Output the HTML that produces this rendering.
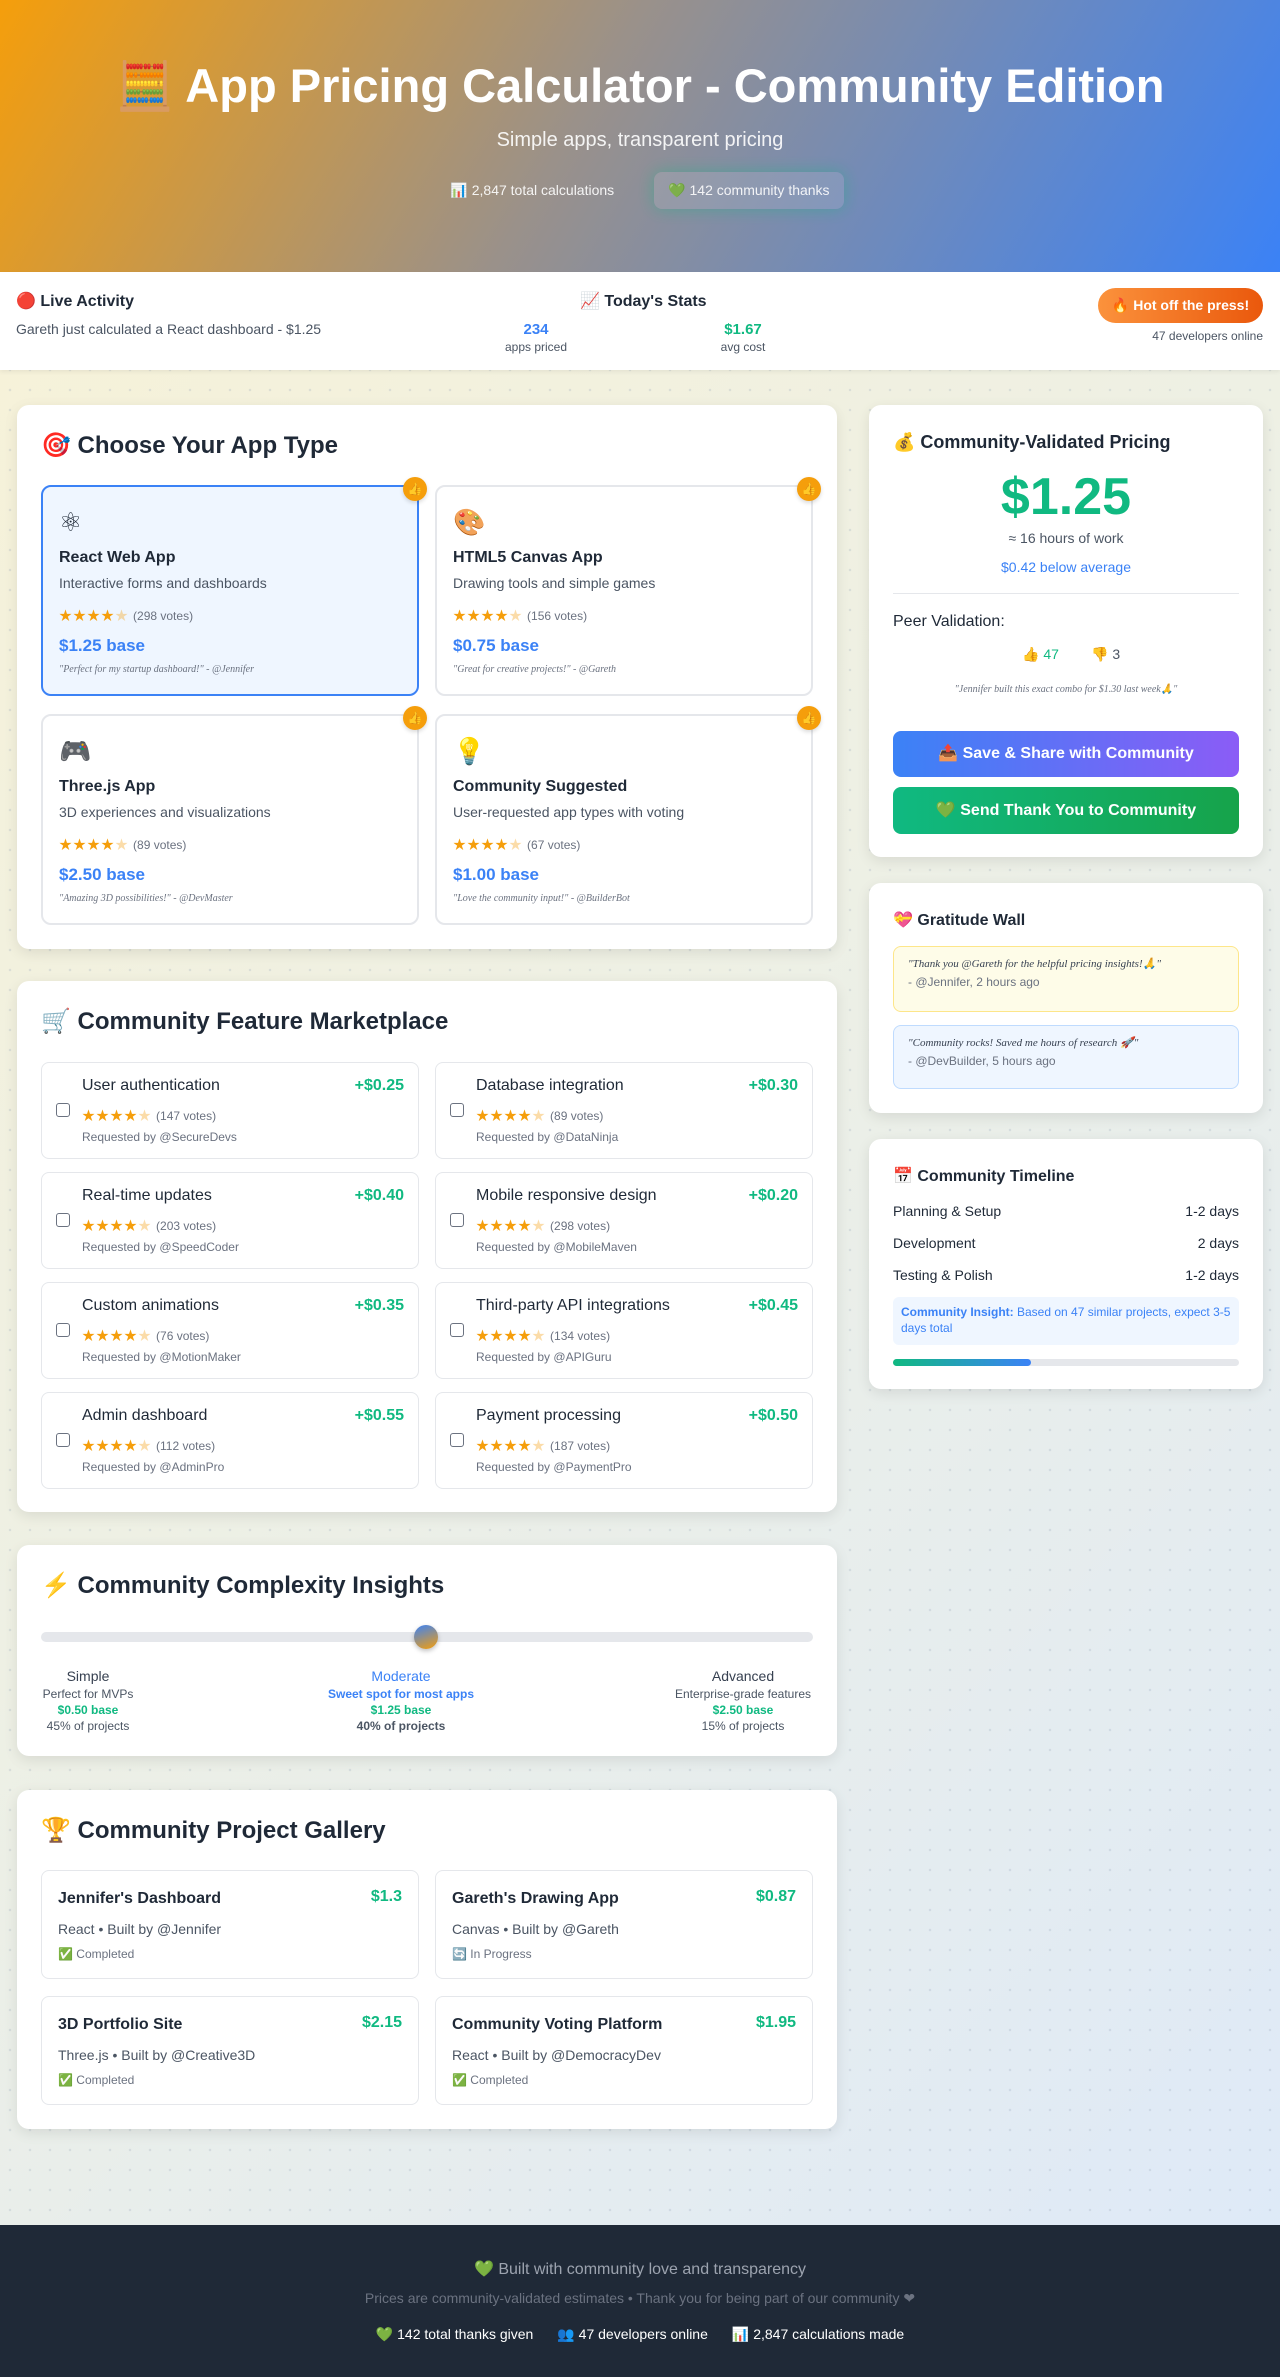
<!DOCTYPE html>
<html><head><meta charset="utf-8"><style>
*{box-sizing:border-box;margin:0;padding:0}
body{width:1280px;height:2377px;position:relative;font-family:"Liberation Sans","Noto Sans CJK SC",sans-serif;color:#1f2937;
background:radial-gradient(circle,rgba(148,163,184,.25) 1px,transparent 1.5px) 0 0/20px 20px,linear-gradient(135deg,#f8f2d6 0%,#eef0e4 45%,#dde9f9 100%);overflow:hidden}
.abs{position:absolute}
header{position:absolute;left:0;top:0;width:1280px;height:272px;background:linear-gradient(120deg,#f59e0b 0%,#9a918a 45%,#3b82f6 100%);color:#fff;text-align:center}
header h1{position:absolute;top:58px;width:100%;font-size:47px;font-weight:700}
header .sub{position:absolute;top:129px;width:100%;font-size:20px;opacity:.9}
header .pills{position:absolute;top:172px;width:100%;display:flex;justify-content:center;gap:26px;font-size:14px}
header .pills span{padding:10px 14px;opacity:.9}
header .pills .glow{background:rgba(255,255,255,.12);border-radius:8px;box-shadow:0 0 16px rgba(16,185,129,.45)}
.bar{position:absolute;top:272px;left:0;width:1280px;height:98px;background:#fff;box-shadow:0 2px 4px rgba(0,0,0,.06)}
.card{position:absolute;background:#fff;border-radius:12px;box-shadow:0 4px 14px rgba(0,0,0,.09)}
.card h2{position:absolute;left:24px;font-size:24px;font-weight:700;color:#1f2937}
.app{position:absolute;width:378px;height:211px;border:2px solid #e5e7eb;border-radius:10px;background:#fff;padding:0 16px}
.app.sel{border-color:#3b82f6;background:#eff6ff}
.app .ic{position:absolute;top:20px;left:16px;font-size:26px}
.app .t{position:absolute;top:62px;left:16px;font-size:16px;font-weight:700}
.app .d{position:absolute;top:88px;left:16px;font-size:14px;color:#4b5563}
.stars{color:#f59e0b;font-size:13px;letter-spacing:1px}
.stars i{font-style:normal;opacity:.35}
.v{color:#6b7280;font-size:12px;margin-left:4px}
.app .s{position:absolute;top:118px;left:16px}
.app .p{position:absolute;top:149px;left:16px;font-size:17px;font-weight:700;color:#3b82f6}
.app .q{position:absolute;top:177px;left:16px;font-size:10px;color:#6b7280;font-style:italic;font-family:"Comic Sans MS",cursive}
.badge{position:absolute;top:-10px;right:-10px;width:24px;height:24px;border-radius:50%;background:#f59e0b;color:#fff;font-size:12px;text-align:center;line-height:24px;box-shadow:0 2px 4px rgba(0,0,0,.15)}
.feat{position:absolute;width:378px;height:97px;border:1.5px solid #e5e7eb;border-radius:8px;background:#fff}
.feat .cb{position:absolute;left:14px;top:40px;width:14px;height:14px;border:1.5px solid #6b7280;border-radius:3px}
.feat .t{position:absolute;left:40px;top:14px;font-size:16px;color:#1f2937}
.feat .s{position:absolute;left:40px;top:42px}
.feat .r{position:absolute;left:40px;top:67px;font-size:12px;color:#6b7280}
.feat .pr{position:absolute;right:14px;top:14px;font-size:16px;font-weight:700;color:#10b981}
.gal{position:absolute;width:378px;height:109px;border:1.5px solid #e5e7eb;border-radius:8px;background:#fff}
.gal .t{position:absolute;left:16px;top:19px;font-size:16px;font-weight:700}
.gal .s{position:absolute;left:16px;top:50px;font-size:14px;color:#4b5563}
.gal .st{position:absolute;left:16px;top:76px;font-size:12px;color:#6b7280}
.gal .pr{position:absolute;right:16px;top:17px;font-size:16px;font-weight:700;color:#10b981}
.cx{position:absolute;text-align:center;font-size:12px;color:#4b5563;line-height:16px}
.cx b{display:block;font-size:14px;font-weight:400;color:#374151;margin-bottom:2px}
.row{position:absolute;left:24px;right:24px;display:flex;justify-content:space-between;font-size:14px;color:#1f2937}
footer{position:absolute;left:0;top:2225px;width:1280px;height:152px;background:#1f2937;text-align:center}
</style></head><body>

<header>
<h1>🧮 App Pricing Calculator - Community Edition</h1>
<div class="sub">Simple apps, transparent pricing</div>
<div class="pills"><span>📊 2,847 total calculations</span><span class="glow">💚 142 community thanks</span></div>
</header>

<div class="bar">
<div class="abs" style="left:16px;top:19px;font-size:16px;font-weight:700">🔴 Live Activity</div>
<div class="abs" style="left:16px;top:49px;font-size:14px;color:#4b5563">Gareth just calculated a React dashboard - $1.25</div>
<div class="abs" style="left:580px;top:19px;font-size:16px;font-weight:700">📈 Today's Stats</div>
<div class="abs" style="left:496px;top:49px;width:80px;text-align:center"><div style="color:#3b82f6;font-weight:700;font-size:15px">234</div><div style="font-size:12px;color:#4b5563;margin-top:2px">apps priced</div></div>
<div class="abs" style="left:703px;top:49px;width:80px;text-align:center"><div style="color:#10b981;font-weight:700;font-size:15px">$1.67</div><div style="font-size:12px;color:#4b5563;margin-top:2px">avg cost</div></div>
<div class="abs" style="left:1098px;top:16px;width:165px;height:35px;border-radius:18px;background:linear-gradient(90deg,#fb923c,#ea580c);color:#fff;font-size:14px;font-weight:700;text-align:center;line-height:35px">🔥 Hot off the press!</div>
<div class="abs" style="right:17px;top:57px;font-size:12px;color:#4b5563">47 developers online</div>
</div>

<!-- App type -->
<div class="card" style="left:17px;top:405px;width:820px;height:544px">
<h2 style="top:26px">🎯 Choose Your App Type</h2>
<div class="app sel" style="left:24px;top:80px"><div class="badge">👍</div><div class="ic">⚛</div><div class="t">React Web App</div><div class="d">Interactive forms and dashboards</div><div class="s"><span class="stars">★★★★<i>★</i></span><span class="v">(298 votes)</span></div><div class="p">$1.25 base</div><div class="q">"Perfect for my startup dashboard!" - @Jennifer</div></div>
<div class="app" style="left:418px;top:80px"><div class="badge">👍</div><div class="ic">🎨</div><div class="t">HTML5 Canvas App</div><div class="d">Drawing tools and simple games</div><div class="s"><span class="stars">★★★★<i>★</i></span><span class="v">(156 votes)</span></div><div class="p">$0.75 base</div><div class="q">"Great for creative projects!" - @Gareth</div></div>
<div class="app" style="left:24px;top:309px"><div class="badge">👍</div><div class="ic">🎮</div><div class="t">Three.js App</div><div class="d">3D experiences and visualizations</div><div class="s"><span class="stars">★★★★<i>★</i></span><span class="v">(89 votes)</span></div><div class="p">$2.50 base</div><div class="q">"Amazing 3D possibilities!" - @DevMaster</div></div>
<div class="app" style="left:418px;top:309px"><div class="badge">👍</div><div class="ic">💡</div><div class="t">Community Suggested</div><div class="d">User-requested app types with voting</div><div class="s"><span class="stars">★★★★<i>★</i></span><span class="v">(67 votes)</span></div><div class="p">$1.00 base</div><div class="q">"Love the community input!" - @BuilderBot</div></div>
</div>

<!-- Features -->
<div class="card" style="left:17px;top:981px;width:820px;height:531px">
<h2 style="top:26px">🛒 Community Feature Marketplace</h2>
<div class="feat" style="left:24px;top:81px"><div class="cb"></div><div class="t">User authentication</div><div class="pr">+$0.25</div><div class="s"><span class="stars">★★★★<i>★</i></span><span class="v">(147 votes)</span></div><div class="r">Requested by @SecureDevs</div></div>
<div class="feat" style="left:418px;top:81px"><div class="cb"></div><div class="t">Database integration</div><div class="pr">+$0.30</div><div class="s"><span class="stars">★★★★<i>★</i></span><span class="v">(89 votes)</span></div><div class="r">Requested by @DataNinja</div></div>
<div class="feat" style="left:24px;top:191px"><div class="cb"></div><div class="t">Real-time updates</div><div class="pr">+$0.40</div><div class="s"><span class="stars">★★★★<i>★</i></span><span class="v">(203 votes)</span></div><div class="r">Requested by @SpeedCoder</div></div>
<div class="feat" style="left:418px;top:191px"><div class="cb"></div><div class="t">Mobile responsive design</div><div class="pr">+$0.20</div><div class="s"><span class="stars">★★★★<i>★</i></span><span class="v">(298 votes)</span></div><div class="r">Requested by @MobileMaven</div></div>
<div class="feat" style="left:24px;top:301px"><div class="cb"></div><div class="t">Custom animations</div><div class="pr">+$0.35</div><div class="s"><span class="stars">★★★★<i>★</i></span><span class="v">(76 votes)</span></div><div class="r">Requested by @MotionMaker</div></div>
<div class="feat" style="left:418px;top:301px"><div class="cb"></div><div class="t">Third-party API integrations</div><div class="pr">+$0.45</div><div class="s"><span class="stars">★★★★<i>★</i></span><span class="v">(134 votes)</span></div><div class="r">Requested by @APIGuru</div></div>
<div class="feat" style="left:24px;top:411px"><div class="cb"></div><div class="t">Admin dashboard</div><div class="pr">+$0.55</div><div class="s"><span class="stars">★★★★<i>★</i></span><span class="v">(112 votes)</span></div><div class="r">Requested by @AdminPro</div></div>
<div class="feat" style="left:418px;top:411px"><div class="cb"></div><div class="t">Payment processing</div><div class="pr">+$0.50</div><div class="s"><span class="stars">★★★★<i>★</i></span><span class="v">(187 votes)</span></div><div class="r">Requested by @PaymentPro</div></div>
</div>

<!-- Complexity -->
<div class="card" style="left:17px;top:1545px;width:820px;height:211px">
<h2 style="top:26px">⚡ Community Complexity Insights</h2>
<div class="abs" style="left:24px;top:87px;width:772px;height:10px;border-radius:5px;background:#e5e7eb"></div>
<div class="abs" style="left:397px;top:80px;width:24px;height:24px;border-radius:50%;background:linear-gradient(160deg,#3b82f6,#f59e0b);box-shadow:0 2px 5px rgba(0,0,0,.25)"></div>
<div class="cx" style="left:4px;top:123px;width:134px"><b>Simple</b>Perfect for MVPs<br><span style="color:#10b981;font-weight:700">$0.50 base</span><br>45% of projects</div>
<div class="cx" style="left:304px;top:123px;width:160px"><b style="color:#3b82f6">Moderate</b><span style="color:#3b82f6;font-weight:700">Sweet spot for most apps</span><br><span style="color:#10b981;font-weight:700">$1.25 base</span><br><span style="font-weight:700">40% of projects</span></div>
<div class="cx" style="left:646px;top:123px;width:160px"><b>Advanced</b>Enterprise-grade features<br><span style="color:#10b981;font-weight:700">$2.50 base</span><br>15% of projects</div>
</div>

<!-- Gallery -->
<div class="card" style="left:17px;top:1790px;width:820px;height:339px">
<h2 style="top:26px">🏆 Community Project Gallery</h2>
<div class="gal" style="left:24px;top:80px"><div class="t">Jennifer's Dashboard</div><div class="pr">$1.3</div><div class="s">React • Built by @Jennifer</div><div class="st">✅ Completed</div></div>
<div class="gal" style="left:418px;top:80px"><div class="t">Gareth's Drawing App</div><div class="pr">$0.87</div><div class="s">Canvas • Built by @Gareth</div><div class="st">🔄 In Progress</div></div>
<div class="gal" style="left:24px;top:206px"><div class="t">3D Portfolio Site</div><div class="pr">$2.15</div><div class="s">Three.js • Built by @Creative3D</div><div class="st">✅ Completed</div></div>
<div class="gal" style="left:418px;top:206px"><div class="t">Community Voting Platform</div><div class="pr">$1.95</div><div class="s">React • Built by @DemocracyDev</div><div class="st">✅ Completed</div></div>
</div>

<!-- Pricing -->
<div class="card" style="left:869px;top:405px;width:394px;height:452px">
<div class="abs" style="left:24px;top:27px;font-size:18px;font-weight:700">💰 Community-Validated Pricing</div>
<div class="abs" style="left:0;top:62px;width:100%;text-align:center;font-size:52px;font-weight:700;color:#10b981">$1.25</div>
<div class="abs" style="left:0;top:125px;width:100%;text-align:center;font-size:14px;color:#4b5563">≈ 16 hours of work</div>
<div class="abs" style="left:0;top:154px;width:100%;text-align:center;font-size:14px;color:#3b82f6">$0.42 below average</div>
<div class="abs" style="left:24px;right:24px;top:188px;height:1px;background:#e5e7eb"></div>
<div class="abs" style="left:24px;top:208px;font-size:16px;color:#1f2937">Peer Validation:</div>
<div class="abs" style="left:153px;top:241px;font-size:14px;color:#10b981">👍 47</div>
<div class="abs" style="left:222px;top:241px;font-size:14px;color:#4b5563">👎 3</div>
<div class="abs" style="left:0;top:279px;width:100%;text-align:center;font-size:10px;color:#6b7280;font-style:italic;font-family:'Comic Sans MS',cursive">"Jennifer built this exact combo for $1.30 last week🙏"</div>
<div class="abs" style="left:24px;right:24px;top:326px;height:46px;border-radius:8px;background:linear-gradient(90deg,#3b82f6,#8b5cf6);color:#fff;font-size:16px;font-weight:700;text-align:center;line-height:46px">📤 Save &amp; Share with Community</div>
<div class="abs" style="left:24px;right:24px;top:382px;height:47px;border-radius:8px;background:linear-gradient(90deg,#10b981,#16a34a);color:#fff;font-size:16px;font-weight:700;text-align:center;line-height:47px">💚 Send Thank You to Community</div>
</div>

<!-- Gratitude -->
<div class="card" style="left:869px;top:883px;width:394px;height:230px">
<div class="abs" style="left:24px;top:27px;font-size:16px;font-weight:700">💝 Gratitude Wall</div>
<div class="abs" style="left:24px;right:24px;top:63px;height:66px;border:1px solid #fde68a;background:#fefce8;border-radius:8px;padding:10px 14px;font-size:12px;color:#6b7280">
<div style="font-style:italic;color:#374151;font-family:'Comic Sans MS',cursive;font-size:11px">"Thank you @Gareth for the helpful pricing insights!🙏"</div><div style="margin-top:5px">- @Jennifer, 2 hours ago</div></div>
<div class="abs" style="left:24px;right:24px;top:142px;height:64px;border:1px solid #bfdbfe;background:#eff6ff;border-radius:8px;padding:10px 14px;font-size:12px;color:#6b7280">
<div style="font-style:italic;color:#374151;font-family:'Comic Sans MS',cursive;font-size:11px">"Community rocks! Saved me hours of research 🚀"</div><div style="margin-top:5px">- @DevBuilder, 5 hours ago</div></div>
</div>

<!-- Timeline -->
<div class="card" style="left:869px;top:1139px;width:394px;height:250px">
<div class="abs" style="left:24px;top:27px;font-size:16px;font-weight:700">📅 Community Timeline</div>
<div class="row" style="top:64px"><span>Planning &amp; Setup</span><span>1-2 days</span></div>
<div class="row" style="top:96px"><span>Development</span><span>2 days</span></div>
<div class="row" style="top:128px"><span>Testing &amp; Polish</span><span>1-2 days</span></div>
<div class="abs" style="left:24px;right:24px;top:158px;height:48px;background:#eff6ff;border-radius:6px;padding:7px 8px;font-size:12px;color:#3b82f6;line-height:16px"><b>Community Insight:</b> Based on 47 similar projects, expect 3-5 days total</div>
<div class="abs" style="left:24px;right:24px;top:220px;height:7px;background:#e5e7eb;border-radius:4px"><div style="width:40%;height:100%;border-radius:4px;background:linear-gradient(90deg,#10b981,#3b82f6)"></div></div>
</div>

<footer>
<div class="abs" style="top:34px;width:100%;font-size:16px;color:#9ca3af">💚 Built with community love and transparency</div>
<div class="abs" style="top:65px;width:100%;font-size:14px;color:#6b7280">Prices are community-validated estimates • Thank you for being part of our community ❤</div>
<div class="abs" style="top:101px;width:100%;font-size:14px;color:#fff;display:flex;justify-content:center;gap:24px"><span>💚 142 total thanks given</span><span>👥 47 developers online</span><span>📊 2,847 calculations made</span></div>
</footer>
</body></html>
